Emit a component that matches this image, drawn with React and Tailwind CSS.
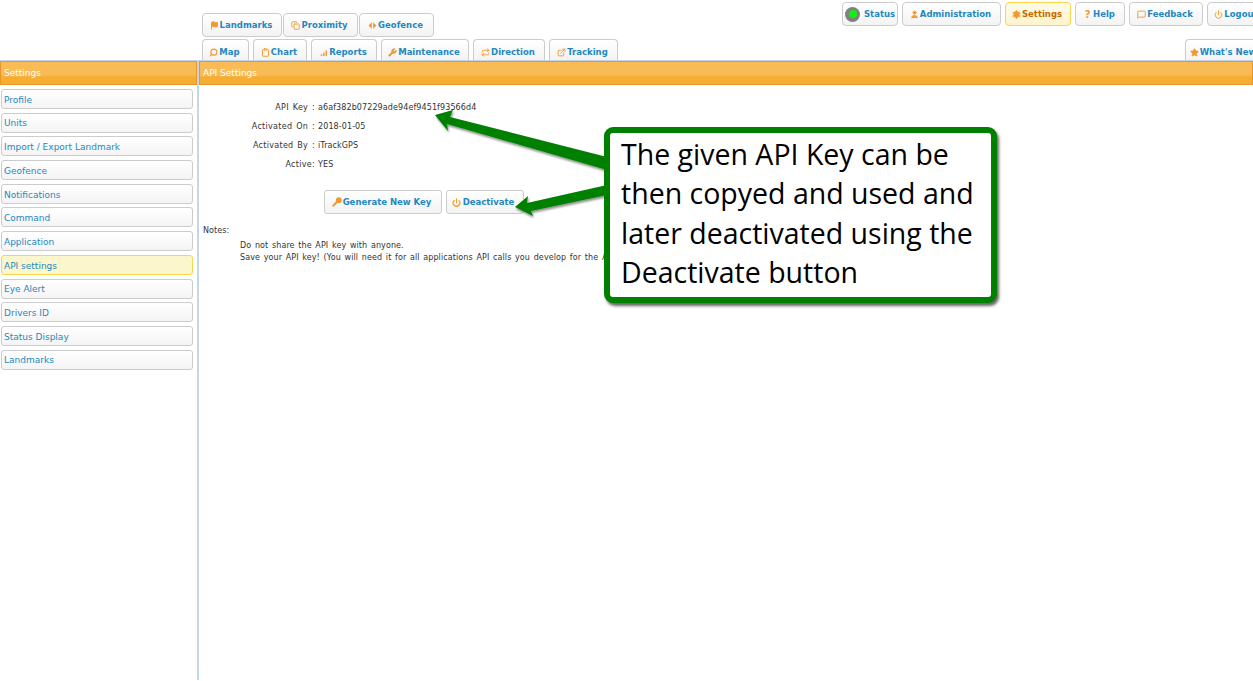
import React from "react";
import { Copy, Search, Clipboard, Wrench, Repeat, ExternalLink, Star, User, Settings, MessageSquare, Power, Flag } from "lucide-react";

// small glyphs lucide has no close match for
const GeofenceIcon = ({ className }) => (
  <svg viewBox="0 0 10 10" width="9" height="9" className={className} fill="currentColor">
    <polygon points="4.3,1.5 4.3,8.5 0.5,5" />
    <polygon points="5.7,1.5 5.7,8.5 9.5,5" />
  </svg>
);

const ReportsIcon = ({ className }) => (
  <svg viewBox="0 0 10 10" width="9" height="9" className={className} fill="currentColor">
    <rect x="2" y="7" width="1.6" height="2" />
    <rect x="4.6" y="5" width="1.6" height="4" />
    <rect x="7.2" y="2.5" width="1.6" height="6.5" />
  </svg>
);

const HelpIcon = ({ className }) => (
  <span className={`${className} text-[10px] leading-none w-[9px] text-center`}>?</span>
);

const KeyIcon = ({ className }) => (
  <svg viewBox="0 0 10 10" width="10" height="10" className={className} fill="currentColor">
    <circle cx="6.8" cy="3.2" r="2.9" />
    <polygon points="5,3.6 6.4,5 2,9.6 0.4,9.6 0.4,8" />
  </svg>
);

const MapIcon = ({ className }) => (
  <Search size={9} strokeWidth={3} className={`${className} -scale-x-100`} />
);

const row1 = [
  { label: "Landmarks", icon: Flag, w: "w-[80px]", filled: true },
  { label: "Proximity", icon: Copy, w: "w-[75px]" },
  { label: "Geofence", icon: GeofenceIcon, w: "w-[75px]" },
];

const row2 = [
  { label: "Map", icon: MapIcon, w: "w-[47px]" },
  { label: "Chart", icon: Clipboard, w: "w-[54px]" },
  { label: "Reports", icon: ReportsIcon, w: "w-[66px]" },
  { label: "Maintenance", icon: Wrench, w: "w-[88px]", filled: true },
  { label: "Direction", icon: Repeat, w: "w-[72px]" },
  { label: "Tracking", icon: ExternalLink, w: "w-[69px]" },
];

const topRight = [
  { label: "Administration", icon: User, w: "w-[99px]", filled: true },
  { label: "Settings", icon: Settings, w: "w-[66px]", active: true, filled: true },
  { label: "Help", icon: HelpIcon, w: "w-[50px]" },
  { label: "Feedback", icon: MessageSquare, w: "w-[74px]" },
  { label: "Logout", icon: Power, w: "w-[60px]" },
];

const menu = [
  "Profile",
  "Units",
  "Import / Export Landmark",
  "Geofence",
  "Notifications",
  "Command",
  "Application",
  "API settings",
  "Eye Alert",
  "Drivers ID",
  "Status Display",
  "Landmarks",
];

const details = [
  ["API Key :", "a6af382b07229ade94ef9451f93566d4"],
  ["Activated On :", "2018-01-05"],
  ["Activated By :", "iTrackGPS"],
  ["Active:", "YES"],
];

function NavButton({ label, icon: Icon, w, active, tab, filled }) {
  return (
    <div
      className={`${w} shrink-0 flex items-center justify-center gap-[1px] pr-[2px] border font-bold text-[8.5px] ${
        tab ? "h-[21px] pt-[4px] rounded-t-[4px] border-b-0" : "h-[24px] pt-[1px] rounded-[4px]"
      } ${
        active
          ? "border-[#fcd34d] bg-gradient-to-b from-[#fffbe8] to-[#fdf3cc] text-[#c46a00]"
          : "border-[#cccccc] bg-gradient-to-b from-[#ffffff] to-[#f3f3f3] text-[#1f88c0]"
      }`}
    >
      <Icon
        size={9}
        strokeWidth={2.5}
        fill={filled ? "currentColor" : "none"}
        className="text-[#f29a2e] shrink-0"
      />
      <span>{label}</span>
    </div>
  );
}

function Bar({ title }) {
  return (
    <div className="h-[24px] flex items-center pl-[3px] pt-[2px] border border-[#e8962a] bg-gradient-to-b from-[#f8bb55] from-55% to-[#f5ad33] to-70% text-white text-[9px]">
      {title}
    </div>
  );
}

export default function App() {
  return (
    <div className="relative w-[1253px] h-[681px] overflow-hidden bg-white text-[#333333] font-['DejaVu_Sans',sans-serif]">
      {/* header */}
      <div className="h-[60px] flex justify-between overflow-hidden">
        <div className="ml-[202px] pt-[13px] flex flex-col gap-[2px]">
          <div className="flex gap-[1px]">
            {row1.map((b) => (
              <NavButton key={b.label} {...b} />
            ))}
          </div>
          <div className="flex gap-[4px]">
            {row2.map((b) => (
              <NavButton key={b.label} {...b} tab />
            ))}
          </div>
        </div>
        <div className="w-[411px] shrink-0 pt-[2px] flex flex-col">
          <div className="flex gap-[4px]">
            <div className="w-[56px] h-[24px] shrink-0 flex items-center gap-[4px] pl-[2px] border border-[#cccccc] rounded-[4px] bg-gradient-to-b from-[#ffffff] to-[#f3f3f3] font-bold text-[8.5px] text-[#1f88c0]">
              <span className="w-[15px] h-[15px] rounded-full bg-[#808080] flex items-center justify-center">
                <span className="w-[8px] h-[8px] rounded-full bg-[#11ee11]" />
              </span>
              Status
            </div>
            {topRight.map((b) => (
              <NavButton key={b.label} {...b} />
            ))}
          </div>
          <div className="mt-[13px] ml-[343px]">
            <NavButton label="What's New" icon={Star} w="w-[78px]" tab filled />
          </div>
        </div>
      </div>

      {/* body */}
      <div className="border-t-[1px] border-[#c3d6ea] flex h-[620px]">
        <div className="w-[197px] shrink-0">
          <Bar title="Settings" />
          <div className="mt-[4px] flex flex-col gap-[3.7px] pl-[1px] pr-[4px]">
            {menu.map((m) => (
              <div
                key={m}
                className={`h-[20px] flex items-center pl-[2px] pt-[3px] border rounded-[3px] text-[9px] text-[#1f88c0] ${
                  m === "API settings"
                    ? "border-[#fcd34d] bg-[#fcf6cc]"
                    : "border-[#cccccc] bg-gradient-to-b from-[#ffffff] to-[#f4f4f4]"
                }`}
              >
                {m}
              </div>
            ))}
          </div>
        </div>
        <div className="flex-1 border-l-[2px] border-[#c3d6ea]">
          <Bar title="API Settings" />
          <div className="pt-[13px] text-[8px] tracking-[0.1px] [word-spacing:1px]">
            {details.map(([k, v]) => (
              <div key={k} className="h-[19px] flex items-center">
                <span className="w-[116px] text-right shrink-0 tracking-[0.3px]">{k}</span>
                <span className="ml-[3px]">{v}</span>
              </div>
            ))}
            <div className="mt-[16px] ml-[125px] flex gap-[4px] tracking-normal [word-spacing:0]">
              <div className="w-[118px] h-[24px] flex items-center justify-center gap-[1px] pr-[3px] border border-[#cccccc] rounded-[3px] bg-gradient-to-b from-[#ffffff] to-[#f3f3f3] font-bold text-[8.5px] text-[#1f88c0]">
                <KeyIcon className="text-[#f29a2e]" />
                Generate New Key
              </div>
              <div className="w-[78px] h-[24px] flex items-center justify-center gap-[2px] pr-[4px] border border-[#cccccc] rounded-[3px] bg-gradient-to-b from-[#ffffff] to-[#f3f3f3] font-bold text-[8.5px] text-[#1f88c0]">
                <Power size={9} strokeWidth={3} className="text-[#f29a2e]" />
                Deactivate
              </div>
            </div>
            <div className="mt-[11px] ml-[4px]">Notes:</div>
            <div className="ml-[41px] mt-[3px] leading-[12px] whitespace-nowrap">
              <div>Do not share the API key with anyone.</div>
              <div>Save your API key! (You will need it for all applications API calls you develop for the API)</div>
            </div>
          </div>
        </div>
      </div>

      {/* annotation arrows */}
      <svg className="absolute left-0 top-0 w-[1253px] h-[681px] pointer-events-none" viewBox="0 0 1253 681">
        <defs>
          <filter id="arrowShadow" x="-10%" y="-20%" width="120%" height="150%">
            <feDropShadow dx="1" dy="2" stdDeviation="1.2" floodColor="#000000" floodOpacity="0.45" />
          </filter>
        </defs>
        <g fill="#008000" filter="url(#arrowShadow)">
          <polygon points="435,115 453,110 450,117 607,157 607,170 447,124 448,131" />
          <polygon points="515,207 528,196 527,203 607,185 607,195 531,211 533,216" />
        </g>
      </svg>

      {/* callout */}
      <div className="absolute left-[604px] top-[127px] w-[393px] h-[176px] border-[6px] border-[#008000] rounded-[9px] bg-white shadow-[2px_3px_3px_rgba(0,0,0,0.6)] pl-[11px] pt-[2px] text-[28.5px] leading-[39.3px] text-black font-['Open_Sans',sans-serif]">
        <div className="whitespace-nowrap">The given API Key can be</div>
        <div className="whitespace-nowrap">then copyed and used and</div>
        <div className="whitespace-nowrap">later deactivated using the</div>
        <div className="whitespace-nowrap">Deactivate button</div>
      </div>
    </div>
  );
}
